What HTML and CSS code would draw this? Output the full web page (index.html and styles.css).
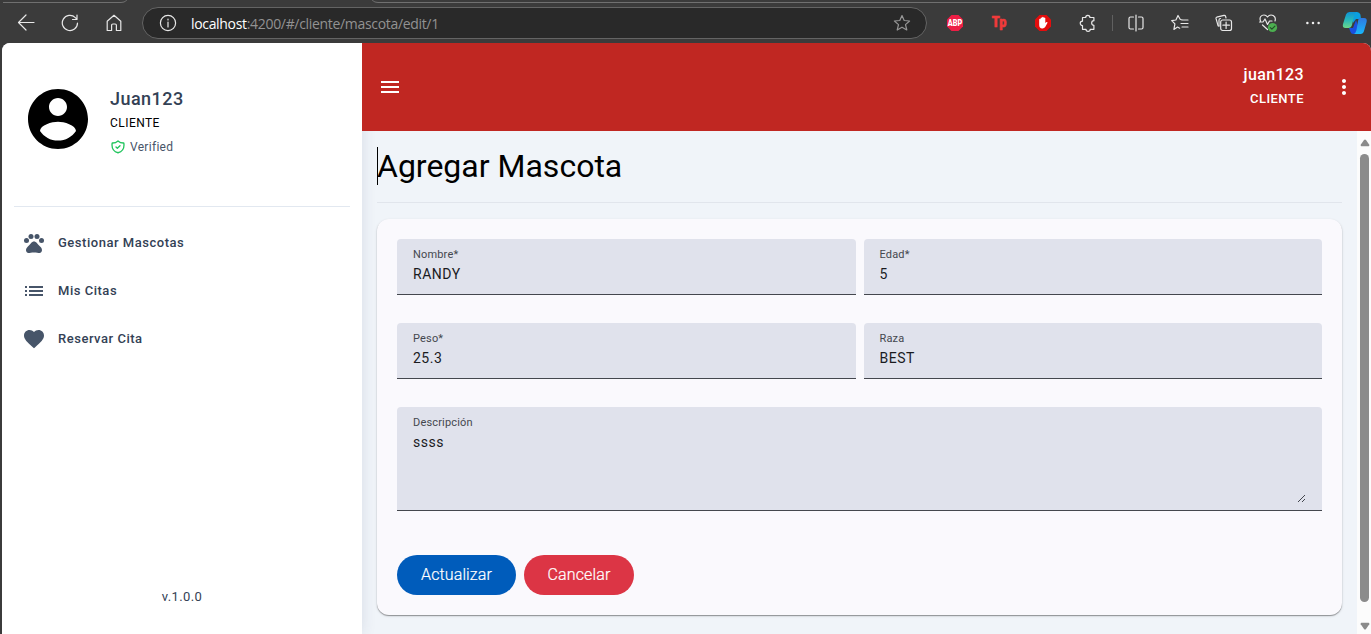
FILE: index.html
```html
<!DOCTYPE html>
<html lang="es">
<head>
<meta charset="utf-8">
<title>Agregar Mascota</title>
<link rel="stylesheet" href="styles.css">
</head>
<body>
<header class="browser">
  <div class="tab-edge tab-edge-left"></div>
  <div class="tab-edge tab-edge-right"></div>
  <div class="tool"><svg width="18" height="18" viewBox="0 0 18 18"><path d="M17 8.5H1.5M9 1L1.5 8.5 9 16"/></svg></div>
  <div class="tool"><svg width="18" height="18" viewBox="0 0 18 18"><path d="M16.500 9A7.600 7.600 0 1 1 14.300 3.600L16 5.300M16 1v4.500h-4.500"/></svg></div>
  <div class="tool"><svg width="18" height="18" viewBox="0 0 18 18"><path d="M2.200 7.300L9 1.300l6.800 6v9.200h-4.400v-5.200a1.300 1.300 0 0 0-1.300-1.300H7.900a1.300 1.300 0 0 0-1.300 1.300v5.200H2.200z"/></svg></div>
  <div class="address">
    <svg class="info" width="18" height="18" viewBox="0 0 18 18"><circle cx="9" cy="9" r="7.600"/><path d="M9 8v5M9 5v1"/></svg>
    <span class="url"><b>localhost</b>:4200/#/cliente/mascota/edit/1</span>
    <svg class="star" width="18" height="18" viewBox="0 0 18 18"><path d="M9 1.500l2.200 5 5.400.5-4.100 3.600 1.300 5.400L9 13.200 4.200 16l1.300-5.400L1.400 7l5.400-.5z"/></svg>
  </div>
  <div class="tool"><svg width="18" height="18" viewBox="0 0 18 18"><path class="abp" d="M5.500 1h7L17 5.500v7L12.500 17h-7L1 12.500v-7z"/><text class="abp-text" x="9" y="12.200" textLength="14.500" lengthAdjust="spacingAndGlyphs">ABP</text></svg></div>
  <div class="tool"><svg width="18" height="18" viewBox="0 0 18 18"><text class="tp-text" x="9" y="13" textLength="14.500" lengthAdjust="spacingAndGlyphs">Tp</text></svg></div>
  <div class="tool"><svg width="18" height="18" viewBox="0 0 18 18"><path class="block" d="M5.500 1h7L17 5.500v7L12.500 17h-7L1 12.500v-7z"/><path class="hand" d="M5.200 8V5.200q.7-1 1.400 0V4q.8-1.100 1.500 0v-.7q.9-1.100 1.600 0V4q.9-1 1.600 0v5l1.300-1q1.200-.2.800.9l-2.200 4.200q-1 1.500-3 1.400Q5.200 14.300 5.200 11z"/></svg></div>
  <div class="tool"><svg width="18" height="18" viewBox="0 0 18 18"><path d="M3.500 3.500h3.200a2.100 2.100 0 0 1 4.200 0h4v3.200c-3 .2-3 4.500 0 4.600v4h-3.700a2.100 2.100 0 0 1-4.200 0H3.500v-3.800c-3 0-3-4.300 0-4.300z"/></svg></div>
  <div class="divider"></div>
  <div class="tool"><svg width="18" height="18" viewBox="0 0 18 18"><path d="M6.500 3H3.500Q2 3 2 4.500v9Q2 15 3.500 15h3M11.500 3h3Q16 3 16 4.500v9q0 1.500-1.500 1.500h-3M9 1v16"/></svg></div>
  <div class="tool"><svg width="18" height="18" viewBox="0 0 18 18"><path d="M11 5.800L9.300 5.500 7 1.500 4.900 6l-4.200.7 3.200 3.200-1 5.500L6.500 13l2.200 1.200M11 6h6M10 9.500h7M11 13h6"/></svg></div>
  <div class="tool"><svg width="18" height="18" viewBox="0 0 18 18"><path d="M4 12l-.9-.2L1 4.400Q.8 3.500 1.700 3.200L9 1.400q1.200-.2 1.600 1L11 4"/><path d="M4 12V6q0-1.500 1.500-1.500"/><rect x="5.700" y="6" width="10.800" height="10.500" rx="2"/><path d="M11.100 8v6.500M7.900 11.200h6.500"/></svg></div>
  <div class="tool"><svg width="20" height="20" viewBox="0 0 20 20"><path d="M2.500 8C1 4 3.500 2 6 2q2 0 3.500 2Q11 2 13 2c3.500 0 5 3 4 6M1.500 9H5l2-3 2.500 5.500L11.500 8H14M4.500 12l5 4.500"/><circle class="check-dot" cx="14.500" cy="14.500" r="4.600"/><path class="check-mark" d="M12.300 14.600l1.600 1.500 3-3"/></svg></div>
  <div class="tool"><svg width="18" height="18" viewBox="0 0 18 18"><g class="dots"><circle cx="3.400" cy="9" r="1.250"/><circle cx="9" cy="9" r="1.250"/><circle cx="14.600" cy="9" r="1.250"/></g></svg></div>
  <div class="copilot"><svg width="26" height="24" viewBox="0 0 26 24">
    <defs>
      <linearGradient id="cpA" x1="0" y1="0" x2="0" y2="1"><stop offset="0" stop-color="#0d92d8"/><stop offset=".5" stop-color="#28b7b9"/><stop offset="1" stop-color="#6cd98a"/></linearGradient>
      <linearGradient id="cpB" x1="0" y1="0" x2="0" y2="1"><stop offset="0" stop-color="#2f78e0"/><stop offset="1" stop-color="#18b7fa"/></linearGradient>
    </defs>
    <path fill="#0aa0e0" d="M9 1h6q2.600 0 3.400 2.600L19 8h-5l-3 4z"/>
    <path fill="#1a4fe0" d="M7 17h4l3-8 2 6-2 8h-2.500q-2.500 0-3.200-2.500z"/>
    <path fill="url(#cpA)" d="M7.500 1h7q-1.600 1-2.500 4L10 14q-.9 3-3.500 3h-3Q0 17 1 13L4 3.500Q4.800 1 7.500 1z"/>
    <path fill="url(#cpB)" d="M17.500 7H22q3.500 0 2.600 4L22 20q-.8 3-3.500 3h-6.500q1.700-1 2.500-4l1.500-9q.5-3 1.500-3z"/>
  </svg></div>
</header>

<div class="app">
  <aside class="sidebar">
    <div class="profile">
      <svg class="avatar" viewBox="2 2 20 20"><path d="M12 2C6.480 2 2 6.480 2 12s4.480 10 10 10 10-4.480 10-10S17.520 2 12 2zm0 3c1.660 0 3 1.340 3 3s-1.340 3-3 3-3-1.340-3-3 1.340-3 3-3zm0 14.200c-2.500 0-4.710-1.280-6-3.220.030-1.990 4-3.080 6-3.080 1.990 0 5.970 1.090 6 3.080-1.290 1.940-3.500 3.220-6 3.220z"/></svg>
      <div class="identity">
        <div class="name">Juan123</div>
        <div class="role">CLIENTE</div>
        <div class="verified"><svg width="16" height="16" viewBox="0 0 24 24"><path d="M9 12l2 2 4-4m5.618-4.016A11.955 11.955 0 0 1 12 2.944a11.955 11.955 0 0 1-8.618 3.040A12.020 12.020 0 0 0 3 9c0 5.591 3.824 10.290 9 11.622 5.176-1.332 9-6.030 9-11.622 0-1.042-.133-2.052-.382-3.016z"/></svg>Verified</div>
      </div>
    </div>
    <nav class="menu">
      <a class="item"><svg viewBox="0 0 24 24"><circle cx="4.500" cy="9.500" r="2.500"/><circle cx="9" cy="5.500" r="2.500"/><circle cx="15" cy="5.500" r="2.500"/><circle cx="19.500" cy="9.500" r="2.500"/><path d="M17.340 14.860c-.870-1.020-1.600-1.890-2.480-2.910-.460-.540-1.050-1.080-1.750-1.320-.110-.040-.220-.070-.330-.090-.250-.040-.520-.040-.780-.040s-.530 0-.790.050c-.110.020-.220.050-.330.090-.700.240-1.280.780-1.750 1.320-.870 1.020-1.600 1.890-2.480 2.910-1.310 1.310-2.920 2.760-2.620 4.790.290 1.020 1.020 2.030 2.330 2.320.730.150 3.060-.440 5.540-.440h.180c2.480 0 4.810.580 5.540.440 1.310-.290 2.040-1.310 2.330-2.320.310-2.040-1.300-3.490-2.610-4.800z"/></svg><span>Gestionar Mascotas</span></a>
      <a class="item"><svg viewBox="0 0 24 24"><path d="M3 13h2v-2H3v2zm0 4h2v-2H3v2zm0-8h2V7H3v2zm4 4h14v-2H7v2zm0 4h14v-2H7v2zM7 7v2h14V7H7z"/></svg><span>Mis Citas</span></a>
      <a class="item"><svg viewBox="0 0 24 24"><path d="M12 21.350l-1.450-1.320C5.400 15.360 2 12.280 2 8.500 2 5.420 4.420 3 7.500 3c1.740 0 3.410.810 4.500 2.090C13.090 3.810 14.760 3 16.500 3 19.580 3 22 5.420 22 8.500c0 3.780-3.400 6.860-8.550 11.540L12 21.350z"/></svg><span>Reservar Cita</span></a>
    </nav>
    <div class="version">v.1.0.0</div>
  </aside>

  <div class="page">
    <div class="topbar">
      <svg width="24" height="24" viewBox="0 0 24 24"><path d="M3 18h18v-2H3v2zm0-5h18v-2H3v2zm0-7v2h18V6H3z"/></svg>
      <div class="user"><div class="user-name">juan123</div><div class="user-role">CLIENTE</div></div>
      <svg width="24" height="24" viewBox="0 0 24 24"><path d="M12 8c1.100 0 2-.900 2-2s-.900-2-2-2-2 .900-2 2 .900 2 2 2zm0 2c-1.100 0-2 .900-2 2s.900 2 2 2 2-.900 2-2-.900-2-2-2zm0 6c-1.100 0-2 .900-2 2s.900 2 2 2 2-.900 2-2-.900-2-2-2z"/></svg>
    </div>
    <div class="body">
      <main class="content">
        <h1 class="title">Agregar Mascota</h1>
        <form class="card">
          <div class="field"><label>Nombre*</label><span>RANDY</span></div>
          <div class="field"><label>Edad*</label><span>5</span></div>
          <div class="field"><label>Peso*</label><span>25.3</span></div>
          <div class="field"><label>Raza</label><span>BEST</span></div>
          <div class="field area"><label>Descripción</label><span>ssss</span>
            <svg class="grip" width="9" height="9" viewBox="0 0 9 9"><path d="M1 8L8 1M5 8l3-3"/></svg></div>
          <div class="actions"><button type="button" class="btn primary">Actualizar</button><button type="button" class="btn danger">Cancelar</button></div>
        </form>
      </main>
      <div class="scrollbar">
        <svg width="10" height="8" viewBox="0 0 10 8"><path d="M4 .900q1-1 2 0l3.300 4.900Q9.500 7.300 8.500 7.300h-7Q.500 7.300.700 5.800z"/></svg>
        <div class="thumb"></div>
        <svg width="10" height="8" viewBox="0 0 10 8"><path d="M4 7.100q1 1 2 0l3.300-4.900Q9.500.700 8.500.700h-7Q.500.700.700 2.200z"/></svg>
      </div>
    </div>
  </div>
</div>
</body>
</html>
```
FILE: styles.css
```css
* { box-sizing: border-box; }
body {
  margin: 0;
  width: 1371px;
  height: 634px;
  overflow: hidden;
  display: flex;
  flex-direction: column;
  background: #3b3b3b;
  font-family: Roboto, "Liberation Sans", sans-serif;
}

/* Browser toolbar */
.browser {
  position: relative;
  height: 43px;
  flex: none;
  display: flex;
  align-items: center;
  padding: 3px 0 0 4px;
}
.tab-edge { position: absolute; top: -5px; height: 8px; border-bottom: 1px solid #707070; }
.tab-edge-left { left: 3px; width: 126px; border-bottom-right-radius: 8px; }
.tab-edge-right { left: 370px; right: 0; border-bottom-left-radius: 8px; }
.tool { width: 44.200px; flex: none; display: flex; justify-content: center; }
.tool svg, .address svg { flex: none; fill: none; stroke: #e8e8e8; stroke-width: 1.200; stroke-linejoin: round; stroke-linecap: round; }
.tool text { stroke: none; text-anchor: middle; font-weight: 900; }
.tool .abp { fill: #ed1e45; stroke: none; }
.tool .abp-text { fill: #fff; font-size: 9px; }
.tool .tp-text { fill: #f13a3a; stroke: #f13a3a; stroke-width: .6; font-size: 15px; }
.tool .block { fill: #e40d0d; stroke: none; }
.tool .hand { fill: #fff; stroke: none; }
.tool .check-dot { fill: #4caf50; stroke: none; }
.tool .check-mark { stroke: #244d28; }
.tool .dots { fill: #f0f0f0; stroke: none; }
.divider { width: 1px; height: 16px; flex: none; margin: 0 1px 0 2px; background: #606060; }
.copilot { flex: none; margin-left: 7px; display: flex; }
.address {
  width: 785px;
  height: 32px;
  flex: none;
  margin: 0 6px 0 5.400px;
  padding: 0 15px 0 16px;
  display: flex;
  align-items: center;
  border: 1px solid #646464;
  border-radius: 16px;
  background: #292929;
}
.url { margin-left: 14px; flex: 1; font-family: "Open Sans", "Noto Sans", sans-serif; font-size: 14px; letter-spacing: -.320px; color: #929292; white-space: nowrap; }
.url b { color: #fff; font-weight: 500; }
.address .star { stroke: #969696; }

/* Application shell */
.app { flex: 1; margin-left: 2px; display: flex; border-radius: 8px 8px 0 0; overflow: hidden; background: #f0f4f9; }
.sidebar { position: relative; width: 360px; flex: none; display: flex; flex-direction: column; padding: 0 12px; background: #fff; box-shadow: 0 0 14px rgba(40, 60, 90, .12); }
.profile { height: 164px; flex: none; display: flex; padding: 44px 14px 0; gap: 22px; border-bottom: 1px solid #e2e8f0; }
.avatar { width: 60px; height: 60px; margin-top: 2px; }
.name { height: 24px; line-height: 24px; font-size: 18px; font-weight: 500; letter-spacing: .450px; color: #334155; }
.role { height: 24px; line-height: 24px; font-size: 12px; letter-spacing: .450px; }
.verified { height: 24px; display: flex; align-items: center; gap: 4px; font-size: 12px; letter-spacing: .300px; color: #475569; }
.verified svg { fill: none; stroke: #22c55e; stroke-width: 2; stroke-linecap: round; stroke-linejoin: round; }
.menu { padding-top: 12px; }
.item { height: 48px; display: flex; align-items: center; gap: 12px; padding: 0 8px; font-size: 13px; font-weight: 500; letter-spacing: .520px; color: #334155; }
.item span { padding-bottom: 2px; }
.item svg { width: 24px; height: 24px; fill: #475569; }
.version { margin: auto 0 28px; text-align: center; font-size: 13px; line-height: 18px; letter-spacing: .400px; color: #334155; }

.page { flex: 1; min-width: 0; display: flex; flex-direction: column; }
.topbar { position: relative; height: 88px; flex: none; display: flex; align-items: center; padding: 0 15px 0 16px; color: #fff; background: #c02722; }
.topbar svg { fill: #fff; }
.user { margin: 0 28px 0 auto; text-align: right; line-height: 24px; }
.user-name { font-size: 16px; font-weight: 500; letter-spacing: .4px; }
.user-role { font-size: 13px; font-weight: 500; letter-spacing: .450px; }
.body { flex: 1; min-height: 0; display: flex; }
.content { flex: 1; padding: 0 15px; }
.title { height: 72px; margin: 0 0 16px; padding-top: 16px; line-height: 38px; font-size: 32px; font-weight: 400; letter-spacing: 0; border-bottom: 1px solid #e1e5ec; }
.title::before { content: ""; display: inline-block; width: 1px; height: 38px; margin-right: -1px; vertical-align: top; background: #000; }
.card { height: 396px; display: grid; grid-template: 56px 56px 104px 40px / 1fr 1fr; column-gap: 8px; row-gap: 28px; align-content: start; padding: 20px; border-radius: 12px; background: #faf9fd; box-shadow: 0 1px 1px rgba(0, 0, 0, .35), 0 1px 3px rgba(0, 0, 0, .12); }
.field { position: relative; display: flex; flex-direction: column; padding: 8px 16px 0; border-bottom: 1px solid #44474e; border-radius: 4px 4px 0 0; background: #e0e2ec; }
.field label { line-height: 15px; font-size: 11px; letter-spacing: .170px; color: #44474e; }
.field span { line-height: 24px; font-size: 14px; letter-spacing: .5px; color: #1a1b1f; }
.area, .actions { grid-column: 1 / -1; }
.grip { position: absolute; right: 16px; bottom: 7px; fill: none; stroke: #44474e; }
.actions { display: flex; gap: 8px; margin-top: 16px; height: 40px; }
.btn { height: 40px; border: 0; border-radius: 20px; padding: 0; color: #fff; font: 300 16px/40px Roboto, sans-serif; letter-spacing: .120px; -webkit-text-stroke: .2px #fff; }
.primary { width: 119px; background: #005cbb; }
.danger { width: 110px; background: #dc3545; }
.scrollbar { width: 14px; display: flex; flex-direction: column; align-items: center; padding: 8px 0 4px 1px; background: #fcfcfc; }
.scrollbar svg { flex: none; fill: #8b8b8b; }
.thumb { width: 9px; height: 448px; margin: 7px 0 auto; border-radius: 5px; background: #8b8b8b; }
```
